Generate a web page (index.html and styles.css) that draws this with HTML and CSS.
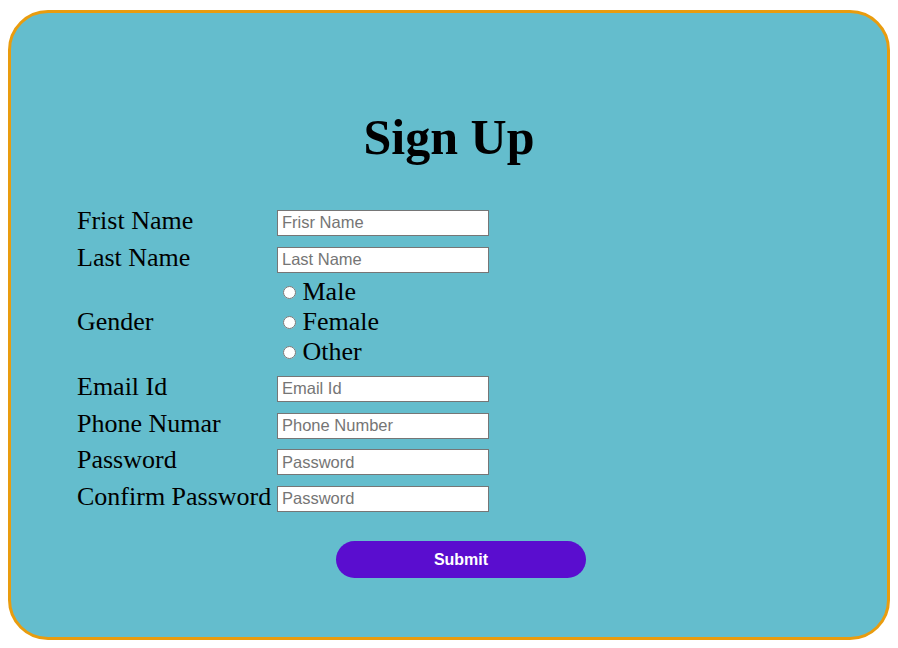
FILE: index.html
```html
<!DOCTYPE html>
<html lang="en">
<head>
<meta charset="utf-8">
<title>Sign Up</title>
<link rel="stylesheet" href="styles.css">
</head>
<body>
<div class="card">
  <h1 class="title">Sign Up</h1>
  <form class="form" onsubmit="return false">
    <div class="grid">
      <label class="lbl" for="fn">Frist Name</label>
      <div class="field"><input class="inp" id="fn" type="text" placeholder="Frisr Name"></div>

      <label class="lbl" for="ln">Last Name</label>
      <div class="field"><input class="inp" id="ln" type="text" placeholder="Last Name"></div>

      <div class="lbl">Gender</div>
      <div class="radios">
        <label class="opt"><input class="rad" type="radio" name="gender"> Male</label>
        <label class="opt"><input class="rad" type="radio" name="gender"> Female</label>
        <label class="opt"><input class="rad" type="radio" name="gender"> Other</label>
      </div>

      <label class="lbl" for="em">Email Id</label>
      <div class="field"><input class="inp" id="em" type="email" placeholder="Email Id"></div>

      <label class="lbl" for="ph">Phone Numar</label>
      <div class="field"><input class="inp" id="ph" type="tel" placeholder="Phone Number"></div>

      <label class="lbl" for="pw">Password</label>
      <div class="field"><input class="inp" id="pw" type="password" placeholder="Password"></div>

      <label class="lbl" for="cpw">Confirm Password</label>
      <div class="field"><input class="inp" id="cpw" type="password" placeholder="Password"></div>
    </div>
    <div class="actions">
      <button class="submit" type="submit">Submit</button>
    </div>
  </form>
</div>
</body>
</html>
```

FILE: styles.css
```css
html, body {
  margin: 0;
  padding: 0;
}
body {
  padding: 10px 8px 8px 8px;
  background: #ffffff;
  font-family: "Liberation Serif", "Times New Roman", serif;
}
.card {
  box-sizing: border-box;
  width: 882px;
  height: 630px;
  border: 3px solid #e99c0e;
  border-radius: 40px;
  background: #64bdcd;
  padding: 99px 0 0 66px;
}
.title {
  margin: 0 0 0 -66px;
  text-align: center;
  font-size: 50px;
  line-height: 50px;
  font-weight: bold;
  color: #000;
}
.form {
  margin-top: 42.67px;
}
.grid {
  display: grid;
  grid-template-columns: 200px 220px;
  grid-template-rows: 36.67px 36.67px 92.67px 36.67px 36.67px 36.67px 36.67px;
  align-items: center;
}
.lbl {
  font-size: 26px;
  line-height: 30px;
  color: #000;
  white-space: nowrap;
  padding-bottom: 4px;
}
.field {
  display: flex;
  align-items: center;
}
.inp {
  box-sizing: border-box;
  width: 212px;
  height: 26px;
  margin: 0;
  border: 1px solid #767676;
  padding: 1px 2px 1px 4px;
  background: #fff;
  font-family: "Liberation Sans", Arial, sans-serif;
  font-size: 16.5px;
  color: #000;
  outline: none;
}
.inp::placeholder {
  color: #757575;
}
.radios {
  display: flex;
  flex-direction: column;
  padding-bottom: 4px;
}
.opt {
  display: block;
  font-size: 26px;
  line-height: 30px;
  color: #000;
  white-space: nowrap;
}
.rad {
  width: 13px;
  height: 13px;
  margin: 3px 0 0 6px;
  vertical-align: 1px;
}
.actions {
  margin-top: 23.7px;
  padding-left: 259px;
}
.submit {
  box-sizing: border-box;
  width: 250px;
  height: 37px;
  margin: 0;
  border: none;
  border-radius: 19px;
  background: #5a0dcf;
  color: #fff;
  font-family: "Liberation Sans", Arial, sans-serif;
  font-size: 16px;
  font-weight: bold;
  padding-top: 2px;
  cursor: pointer;
}
```
